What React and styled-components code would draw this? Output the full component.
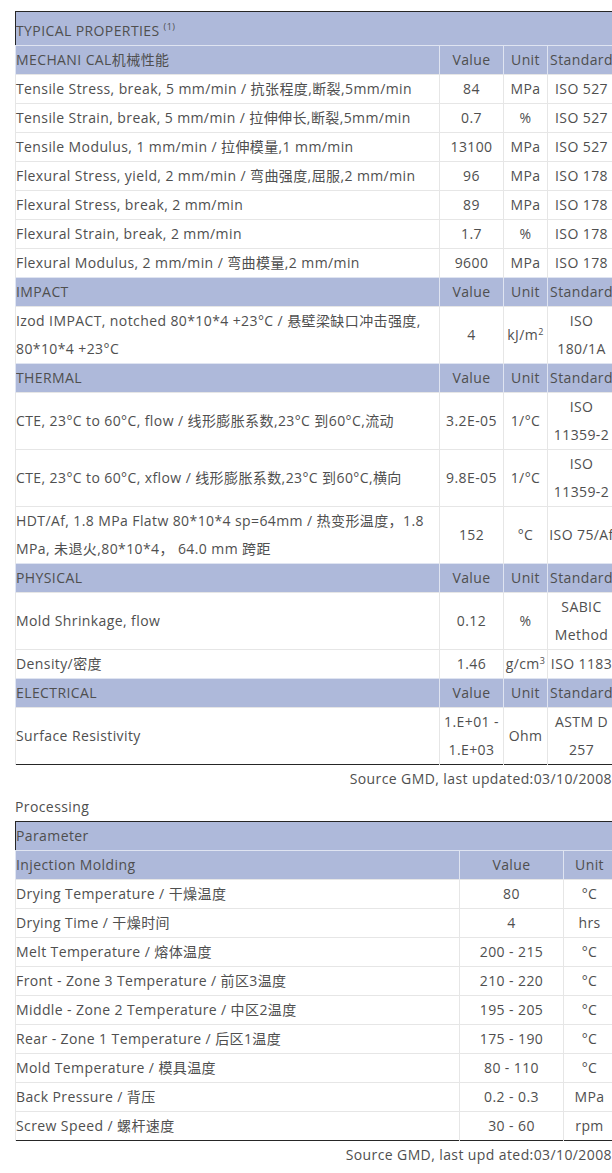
import React from "react";
import styled, { createGlobalStyle } from "styled-components";

const Global = createGlobalStyle`
  html, body { margin: 0; padding: 0; overflow: hidden; background: #fff; }
  body { font-family: "Open Sans", "Noto Sans CJK SC", sans-serif; color: #4f4f4f; letter-spacing: 0.4px; }
`;

const Page = styled.div`
  width: 597px;
  padding: 11px 0 0 15px;
`;

const Table = styled.table`
  width: 600px;
  table-layout: fixed;
  border-collapse: collapse;
  border: 1px solid #262626;
  font-size: 14px;
  line-height: 28px;
`;

const TitleCell = styled.th`
  background: #aeb9da;
  text-align: left;
  font-weight: 400;
  padding: ${(p) => (p.$tall ? "5px 1px 0 0" : "0 1px 0 0")};
  height: 28px;
  box-sizing: content-box;
  sup { font-size: 9px; line-height: 0; vertical-align: 6px; }
`;

const HeadCell = styled.th`
  background: #aeb9da;
  font-weight: 400;
  padding: ${(p) => (p.$left ? "0 1px 0 0" : "0 1px")};
  text-align: ${(p) => (p.$left ? "left" : "center")};
  border-left: 1px solid #dfe4f1;
  border-top: 1px solid #dfe4f1;
  white-space: nowrap;
  overflow: hidden;
`;

const Cell = styled.td`
  padding: ${(p) => (p.$left ? "0 1px 0 0" : "0 1px")};
  text-align: ${(p) => (p.$left ? "left" : "center")};
  vertical-align: middle;
  border-left: 1px solid #e6e6e6;
  border-top: 1px solid #e6e6e6;
  sup { font-size: 9px; line-height: 0; vertical-align: 5px; }
`;

const Source = styled.div`
  text-align: right;
  font-size: 14px;
  line-height: 28px;
`;

const Heading = styled.div`
  font-size: 14px;
  line-height: 28px;
`;

const props1 = [
  {
    section: "MECHANI CAL机械性能",
    rows: [
      ["Tensile Stress, break, 5 mm/min / 抗张程度,断裂,5mm/min", "84", "MPa", "ISO 527"],
      ["Tensile Strain, break, 5 mm/min / 拉伸伸长,断裂,5mm/min", "0.7", "%", "ISO 527"],
      ["Tensile Modulus, 1 mm/min / 拉伸模量,1 mm/min", "13100", "MPa", "ISO 527"],
      ["Flexural Stress, yield, 2 mm/min / 弯曲强度,屈服,2 mm/min", "96", "MPa", "ISO 178"],
      ["Flexural Stress, break, 2 mm/min", "89", "MPa", "ISO 178"],
      ["Flexural Strain, break, 2 mm/min", "1.7", "%", "ISO 178"],
      ["Flexural Modulus, 2 mm/min / 弯曲模量,2 mm/min", "9600", "MPa", "ISO 178"],
    ],
  },
  {
    section: "IMPACT",
    rows: [
      ["Izod IMPACT, notched 80*10*4 +23°C / 悬壁梁缺口冲击强度, 80*10*4 +23°C", "4", <>kJ/m<sup>2</sup></>, "ISO 180/1A"],
    ],
  },
  {
    section: "THERMAL",
    rows: [
      ["CTE, 23°C to 60°C, flow / 线形膨胀系数,23°C 到60°C,流动", "3.2E-05", "1/°C", "ISO 11359-2"],
      ["CTE, 23°C to 60°C, xflow / 线形膨胀系数,23°C 到60°C,横向", "9.8E-05", "1/°C", "ISO 11359-2"],
      ["HDT/Af, 1.8 MPa Flatw 80*10*4 sp=64mm / 热变形温度，1.8 MPa, 未退火,80*10*4， 64.0 mm 跨距", "152", "°C", "ISO 75/Af"],
    ],
  },
  {
    section: "PHYSICAL",
    rows: [
      ["Mold Shrinkage, flow", "0.12", "%", "SABIC Method"],
      ["Density/密度", "1.46", <>g/cm<sup>3</sup></>, "ISO 1183"],
    ],
  },
  {
    section: "ELECTRICAL",
    rows: [["Surface Resistivity", "1.E+01 - 1.E+03", "Ohm", "ASTM D 257"]],
  },
];

const processing = [
  ["Drying Temperature / 干燥温度", "80", "°C"],
  ["Drying Time / 干燥时间", "4", "hrs"],
  ["Melt Temperature / 熔体温度", "200 - 215", "°C"],
  ["Front - Zone 3 Temperature / 前区3温度", "210 - 220", "°C"],
  ["Middle - Zone 2 Temperature / 中区2温度", "195 - 205", "°C"],
  ["Rear - Zone 1 Temperature / 后区1温度", "175 - 190", "°C"],
  ["Mold Temperature / 模具温度", "80 - 110", "°C"],
  ["Back Pressure / 背压", "0.2 - 0.3", "MPa"],
  ["Screw Speed / 螺杆速度", "30 - 60", "rpm"],
];

export default function App() {
  return (
    <Page>
      <Global />
      <Table>
        <colgroup>
          <col style={{ width: 424 }} />
          <col style={{ width: 64 }} />
          <col style={{ width: 44 }} />
          <col style={{ width: 68 }} />
        </colgroup>
        <tbody>
          <tr>
            <TitleCell colSpan={4} $tall>
              TYPICAL PROPERTIES <sup>(1)</sup>
            </TitleCell>
          </tr>
          {props1.map((s) => (
            <React.Fragment key={s.section}>
              <tr>
                <HeadCell $left>{s.section}</HeadCell>
                <HeadCell>Value</HeadCell>
                <HeadCell>Unit</HeadCell>
                <HeadCell>Standard</HeadCell>
              </tr>
              {s.rows.map((r, i) => (
                <tr key={i}>
                  <Cell $left>{r[0]}</Cell>
                  <Cell>{r[1]}</Cell>
                  <Cell>{r[2]}</Cell>
                  <Cell>{r[3]}</Cell>
                </tr>
              ))}
            </React.Fragment>
          ))}
        </tbody>
      </Table>
      <Source>Source GMD, last updated:03/10/2008</Source>
      <Heading>Processing</Heading>
      <Table>
        <colgroup>
          <col style={{ width: 444 }} />
          <col style={{ width: 104 }} />
          <col style={{ width: 52 }} />
        </colgroup>
        <tbody>
          <tr>
            <TitleCell colSpan={3}>Parameter</TitleCell>
          </tr>
          <tr>
            <HeadCell $left>Injection Molding</HeadCell>
            <HeadCell>Value</HeadCell>
            <HeadCell>Unit</HeadCell>
          </tr>
          {processing.map((r, i) => (
            <tr key={i}>
              <Cell $left>{r[0]}</Cell>
              <Cell>{r[1]}</Cell>
              <Cell>{r[2]}</Cell>
            </tr>
          ))}
        </tbody>
      </Table>
      <Source>Source GMD, last upd ated:03/10/2008</Source>
    </Page>
  );
}
